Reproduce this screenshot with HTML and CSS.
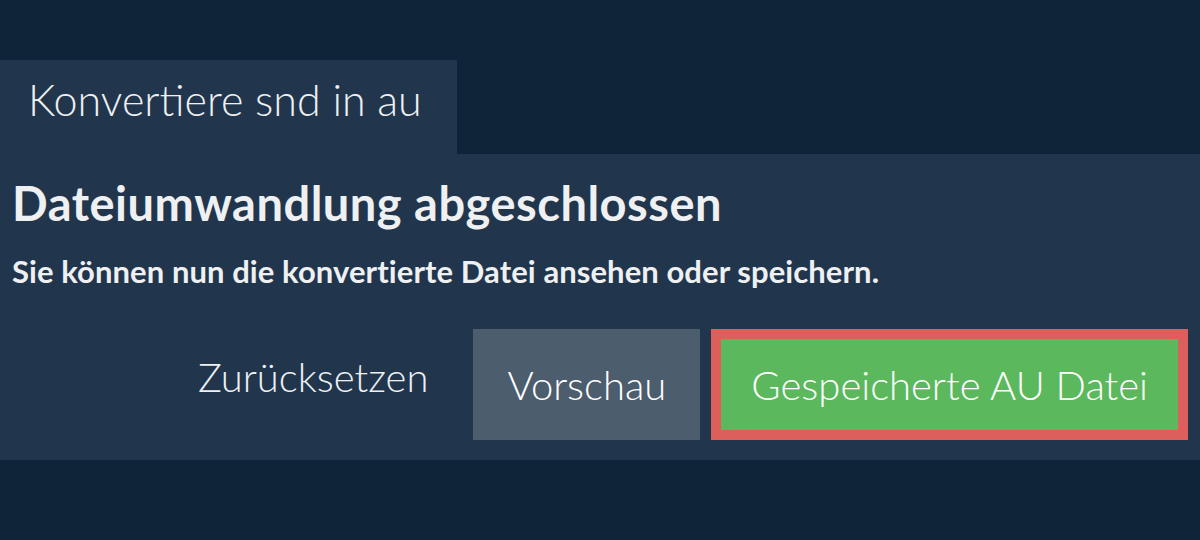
FILE: index.html
```html
<!DOCTYPE html>
<html lang="de">
<head>
    <meta charset="UTF-8">
    <meta name="viewport" content="width=device-width, initial-scale=1.0">
    <title>Konvertiere snd in au</title>
    <link rel="stylesheet" href="styles.css">
</head>
<body>
    <div class="page">
        <div class="tab">
            <h2 class="tab-title">Konvertiere snd in au</h2>
        </div>
        <div class="panel">
            <h1 class="done-title">Dateiumwandlung abgeschlossen</h1>
            <p class="done-text">Sie können nun die konvertierte Datei ansehen oder speichern.</p>
            <div class="actions">
                <button class="btn btn-reset">Zurücksetzen</button>
                <button class="btn btn-preview">Vorschau</button>
                <button class="btn btn-save">Gespeicherte AU Datei</button>
            </div>
        </div>
    </div>
</body>
</html>
```

FILE: styles.css
```css
body {
    margin: 0;
    background-color: #0f2439;
    color: #eef0f2;
    font-family: Lato, "Open Sans", sans-serif;
}
.page {
    padding-top: 60px;
}
.tab {
    width: 457px;
    height: 94px;
    box-sizing: border-box;
    padding-top: 18px;
    background-color: #21364d;
}
.tab-title {
    margin: 0;
    padding-left: 28px;
    font-size: 43px;
    font-weight: 300;
    line-height: 43px;
}
.panel {
    background-color: #21364d;
    height: 306px;
    box-sizing: border-box;
    padding: 21px 12px 0 12px;
}
.done-title {
    margin: 0;
    font-size: 47px;
    font-weight: 700;
    line-height: 56px;
    letter-spacing: 0.5px;
}
.done-text {
    margin: 21px 0 0;
    font-size: 31px;
    font-weight: 700;
    line-height: 38px;
    letter-spacing: 0.08px;
}
.actions {
    display: flex;
    justify-content: flex-end;
    gap: 11px;
    margin-top: 39px;
}
.btn {
    font-family: Lato, "Open Sans", sans-serif;
    font-size: 40px;
    font-weight: 300;
    color: #ffffff;
    height: 111px;
    padding: 0 34px;
    border: 0;
    background: none;
    box-sizing: border-box;
}
.btn-reset {
    color: #eef0f2;
    padding-bottom: 16px;
}
.btn-preview {
    background-color: #4c5d6e;
}
.btn-save {
    background-color: #5cb85c;
    border: 10px solid #dc5f5c;
    padding: 0 30px;
}
```
